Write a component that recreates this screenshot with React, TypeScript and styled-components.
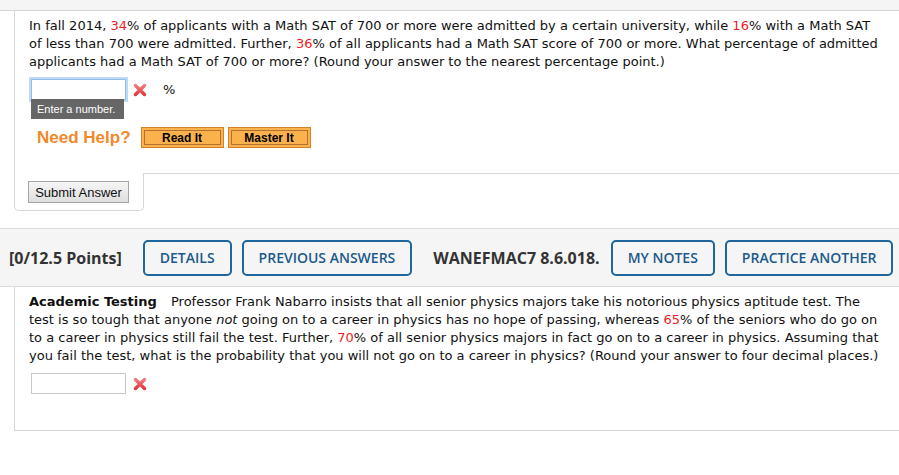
import React from "react";
import styled, { createGlobalStyle } from "styled-components";

const Global = createGlobalStyle`
  html, body { margin: 0; padding: 0; background: #fff; overflow: hidden; }
  * { box-sizing: border-box; }
`;

const LINE = "#d6d6d6";

const Page = styled.div`
  width: 899px;
  font-family: "DejaVu Sans", Verdana, sans-serif;
`;

const TopStrip = styled.div`
  height: 11px;
  background: #f5f5f5;
  border-bottom: 1px solid ${LINE};
`;

const QuestionBody = styled.div<{ $closed?: boolean }>`
  margin-left: 14px;
  border-left: 1px solid ${LINE};
  border-bottom: ${(p) => (p.$closed ? `1px solid ${LINE}` : "none")};
  padding: 6px 0 ${(p) => (p.$closed ? "36px" : "25px")} 14px;
`;

const QuestionText = styled.p`
  margin: 0;
  max-width: 854px;
  font-size: 13px;
  line-height: 18px;
  color: #111;
`;

const Num = styled.span`
  color: #ee1c25;
`;

const Title = styled.b`
  margin-right: 10px;
`;

const AnswerRow = styled.div`
  position: relative;
  display: flex;
  align-items: center;
  margin-top: 8px;
  padding-left: 2px;
  height: 21px;
`;

const AnswerInput = styled.input<{ $focused?: boolean }>`
  width: 95px;
  height: 21px;
  margin: 0;
  border: 1px solid ${(p) => (p.$focused ? "#93bde8" : "#c8c8c8")};
  box-shadow: ${(p) => (p.$focused ? "0 0 0 2px #bcd9f6" : "none")};
  outline: none;
  background: #fff;
  font: 13px "DejaVu Sans", sans-serif;
`;

const WrongMark = styled.svg`
  margin-left: 7px;
  width: 14px;
  height: 14px;
  flex: none;
`;

const Unit = styled.span`
  margin-left: 16px;
  font: 13px "DejaVu Sans", sans-serif;
  color: #111;
`;

const Tooltip = styled.div`
  position: absolute;
  left: 2px;
  top: 20px;
  width: 93px;
  height: 20px;
  padding-left: 6px;
  background: #666;
  color: #fff;
  font: 11px "Liberation Sans", Arial, sans-serif;
  line-height: 20px;
  white-space: nowrap;
`;

const HelpRow = styled.div`
  display: flex;
  align-items: center;
  margin-top: 27px;
  height: 21px;
`;

const NeedHelp = styled.span`
  margin-left: 8px;
  margin-right: 10px;
  font: bold 17px "Liberation Sans", Arial, sans-serif;
  color: #f0892a;
`;

const HelpButton = styled.button`
  width: 83px;
  height: 21px;
  margin: 0 4px 0 0;
  padding: 0;
  background: #fbb24c;
  border: 1px solid #d2802a;
  box-shadow: inset 0 0 0 2px #fbb24c, inset 0 0 0 3px #b2712f;
  font: bold 12px "Liberation Sans", Arial, sans-serif;
  color: #000;
`;

const Footer = styled.div`
  display: flex;
`;

const SubmitTab = styled.div`
  width: 130px;
  padding: 8px 13px 7px 13px;
  margin-left: 14px;
  border: 1px solid ${LINE};
  border-top: none;
  border-radius: 0 0 5px 5px;
`;

const Filler = styled.div`
  flex: 1;
  border-top: 1px solid ${LINE};
`;

const SubmitButton = styled.button`
  width: 101px;
  height: 22px;
  margin: 0;
  padding: 0;
  border: 1px solid #a6a6a6;
  background: linear-gradient(#f6f6f6, #dedede);
  font: 13px "Liberation Sans", Arial, sans-serif;
  color: #111;
`;

const Band = styled.div`
  display: flex;
  align-items: center;
  height: 59px;
  margin-top: 17px;
  padding-left: 9px;
  background: #f5f5f5;
  border-top: 1px solid #dcdcdc;
  border-bottom: 1px solid #dcdcdc;
  font-family: "Open Sans", sans-serif;
  white-space: nowrap;
`;

const BandLabel = styled.span<{ $gap: number }>`
  font-weight: 700;
  font-size: 16px;
  color: #333;
  margin-right: ${(p) => p.$gap}px;
`;

const OutlineButton = styled.button<{ $gap: number }>`
  height: 36px;
  padding: 0 15px;
  margin: 0 ${(p) => p.$gap}px 0 0;
  background: transparent;
  border: 2px solid #1f669d;
  border-radius: 5px;
  font-family: "Open Sans", sans-serif;
  font-weight: 600;
  font-size: 14px;
  color: #1c5a8c;
`;

const Cross = () => (
  <WrongMark viewBox="0 0 14 14">
    <defs>
      <linearGradient id="xg" x1="0" y1="0" x2="0" y2="1">
        <stop offset="0" stopColor="#f47a7e" />
        <stop offset="1" stopColor="#e2393f" />
      </linearGradient>
    </defs>
    <path d="M2.5 2.5 L11.5 11.5 M11.5 2.5 L2.5 11.5" stroke="url(#xg)" strokeWidth="3.4" strokeLinecap="round" fill="none" />
  </WrongMark>
);

export default function App() {
  return (
    <Page>
      <Global />
      <TopStrip />
      <QuestionBody>
        <QuestionText>
          In fall 2014, <Num>34</Num>% of applicants with a Math SAT of 700 or more were admitted by a certain
          university, while <Num>16</Num>% with a Math SAT of less than 700 were admitted. Further, <Num>36</Num>% of
          all applicants had a Math SAT score of 700 or more. What percentage of admitted applicants had a Math SAT of
          700 or more? (Round your answer to the nearest percentage point.)
        </QuestionText>
        <AnswerRow>
          <AnswerInput $focused />
          <Cross />
          <Unit>%</Unit>
          <Tooltip>Enter a number.</Tooltip>
        </AnswerRow>
        <HelpRow>
          <NeedHelp>Need Help?</NeedHelp>
          <HelpButton>Read It</HelpButton>
          <HelpButton>Master It</HelpButton>
        </HelpRow>
      </QuestionBody>
      <Footer>
        <SubmitTab>
          <SubmitButton>Submit Answer</SubmitButton>
        </SubmitTab>
        <Filler />
      </Footer>
      <Band>
        <BandLabel $gap={21}>[0/12.5 Points]</BandLabel>
        <OutlineButton $gap={10}>DETAILS</OutlineButton>
        <OutlineButton $gap={21}>PREVIOUS ANSWERS</OutlineButton>
        <BandLabel $gap={11}>WANEFMAC7 8.6.018.</BandLabel>
        <OutlineButton $gap={10}>MY NOTES</OutlineButton>
        <OutlineButton $gap={0}>PRACTICE ANOTHER</OutlineButton>
      </Band>
      <QuestionBody $closed>
        <QuestionText>
          <Title>Academic Testing</Title> Professor Frank Nabarro insists that all senior physics majors take his
          notorious physics aptitude test. The test is so tough that anyone <i>not</i> going on to a career in physics
          has no hope of passing, whereas <Num>65</Num>% of the seniors who do go on to a career in physics still fail
          the test. Further, <Num>70</Num>% of all senior physics majors in fact go on to a career in physics. Assuming
          that you fail the test, what is the probability that you will not go on to a career in physics? (Round your
          answer to four decimal places.)
        </QuestionText>
        <AnswerRow>
          <AnswerInput />
          <Cross />
        </AnswerRow>
      </QuestionBody>
    </Page>
  );
}
